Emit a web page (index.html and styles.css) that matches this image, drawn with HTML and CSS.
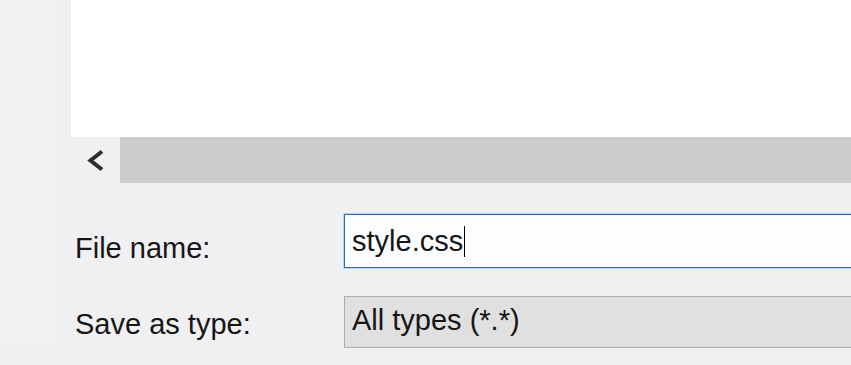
FILE: index.html
```html
<!DOCTYPE html>
<html lang="en">
<head>
    <meta charset="UTF-8">
    <meta name="viewport" content="width=device-width, initial-scale=1.0">
    <title>Save As</title>
    <link rel="stylesheet" href="styles.css">
</head>
<body>
    <div class="sidebar"></div>

    <div class="main">
        <div class="file-list"></div>

        <div class="hscroll">
            <div class="scroll-btn">
                <svg width="19" height="23" viewBox="0 0 19 23">
                    <polyline points="16,2.5 4.5,11.5 16,20.5" fill="none" stroke="#2e2e2e" stroke-width="4"/>
                </svg>
            </div>
            <div class="scroll-thumb"></div>
        </div>

        <div class="save-form">
            <div class="form-row name-row">
                <label class="field-label">File name:</label>
                <div class="text-field">style.css<span class="caret"></span></div>
            </div>

            <div class="form-row type-row">
                <label class="field-label">Save as type:</label>
                <div class="type-select">All types (*.*)</div>
            </div>
        </div>
    </div>
</body>
</html>
```

FILE: styles.css
```css
body {
    margin: 0;
    height: 365px;
    display: flex;
    align-items: flex-start;
    overflow: hidden;
    background-color: #f0eff1;
    font-family: "Liberation Sans", Arial, sans-serif;
    font-size: 29px;
    color: #161616;
}
.sidebar {
    width: 55px;
    height: 345px;
    flex-shrink: 0;
    background-color: #f3f2f3;
}
.main {
    flex: 1;
    min-width: 0;
    padding-left: 16px;
}
.file-list {
    height: 137px;
    background: #ffffff;
}
.hscroll {
    display: flex;
    height: 46px;
}
.scroll-btn {
    width: 49px;
    display: flex;
    align-items: center;
    justify-content: center;
    padding-top: 1px;
    box-sizing: border-box;
}
.scroll-thumb {
    flex: 1;
    background-color: #cdcccd;
}
.save-form {
    padding-left: 4px;
    overflow: hidden;
}
.form-row {
    display: flex;
    align-items: flex-start;
    line-height: 34px;
}
.field-label {
    width: 269px;
    flex-shrink: 0;
}
.name-row {
    margin-top: 31px;
}
.name-row .field-label {
    padding-top: 17px;
}
.text-field {
    width: 600px;
    flex-shrink: 0;
    height: 34px;
    padding: 9px 7px;
    background: #fcfdff;
    border: 1px solid #2f6cb3;
    box-shadow: 0 0 0 1px #b6d5f3;
    white-space: nowrap;
}
.caret {
    display: inline-block;
    width: 1px;
    height: 31px;
    margin-left: 1px;
    vertical-align: -6px;
    background: #000;
}
.type-row {
    margin-top: 28px;
}
.type-row .field-label {
    padding-top: 11px;
}
.type-select {
    width: 600px;
    flex-shrink: 0;
    height: 34px;
    padding: 6px 7px 10px;
    background-color: #e1e0e1;
    border: 1px solid #adadad;
    white-space: nowrap;
}
```
